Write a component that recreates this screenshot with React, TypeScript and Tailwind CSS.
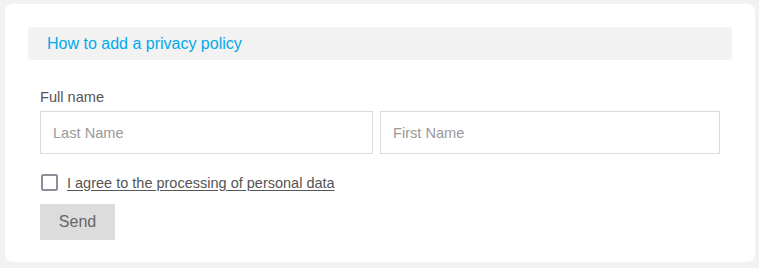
export default function App() {
  return (
    <div className="min-h-[268px] bg-[#f2f2f2] pt-[4px] pl-[5px] font-['Liberation_Sans',Arial,sans-serif]">
      <div className="h-[258px] w-[750px] rounded-[8px] bg-white px-[23px] pt-[23px]">
        <div className="flex h-[33px] items-center rounded-[3px] bg-[#f2f2f2] pl-[19px]">
          <a href="#" className="text-[16px] leading-none text-[#00a9ec]">
            How to add a privacy policy
          </a>
        </div>

        <form className="px-[12px] pt-[29px]" onSubmit={(e) => e.preventDefault()}>
          <label className="mb-[6px] block text-[14.6px] leading-[16px] text-[#555]">Full name</label>
          <div className="flex gap-[7px]">
            <input
              type="text"
              placeholder="Last Name"
              className="h-[43px] w-[333px] border border-[#dadada] px-[12px] text-[14.6px] text-[#555] placeholder-[#999] outline-none"
            />
            <input
              type="text"
              placeholder="First Name"
              className="h-[43px] w-[340px] border border-[#dadada] px-[12px] text-[14.6px] text-[#555] placeholder-[#999] outline-none"
            />
          </div>

          <label className="mt-[20px] flex items-center gap-[9px]">
            <span className="ml-[1px] h-[17px] w-[17px] rounded-[2px] border-2 border-[#8e8c99] bg-white" />
            <span className="text-[14.5px] leading-[16px] text-[#555] underline underline-offset-2">
              I agree to the processing of personal data
            </span>
          </label>

          <button
            type="submit"
            className="mt-[13px] h-[36px] w-[75px] bg-[#dcdcdc] text-[16px] text-[#666]"
          >
            Send
          </button>
        </form>
      </div>
    </div>
  );
}
